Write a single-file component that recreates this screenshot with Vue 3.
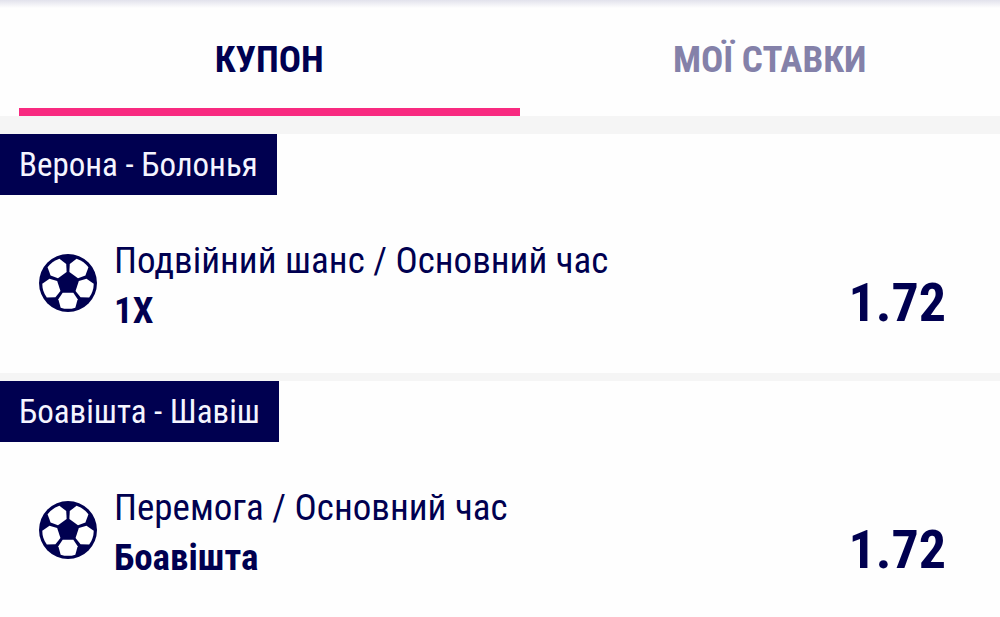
<script setup>
import { ref } from 'vue'

const tabs = [
  { id: 'coupon', label: 'КУПОН' },
  { id: 'bets', label: 'МОЇ СТАВКИ' },
]
const active = ref('coupon')

const events = [
  { id: 1, match: 'Верона - Болонья', market: 'Подвійний шанс / Основний час', pick: '1X', odds: '1.72' },
  { id: 2, match: 'Боавішта - Шавіш', market: 'Перемога / Основний час', pick: 'Боавішта', odds: '1.72' },
]

const patches = [0, 72, 144, 216, 288]
</script>

<template>
  <main class="slip">
    <nav class="tabs">
      <button
        v-for="tab in tabs"
        :key="tab.id"
        type="button"
        class="tab"
        :class="{ active: active === tab.id }"
        @click="active = tab.id"
      >
        {{ tab.label }}
      </button>
    </nav>

    <section class="events">
      <article v-for="event in events" :key="event.id" class="event">
        <h2 class="match">{{ event.match }}</h2>
        <div class="body">
          <svg class="ball" viewBox="-87 -87 174 174" aria-hidden="true">
            <circle r="87" fill="#000050" />
            <path
              v-for="angle in patches"
              :key="angle"
              d="M-16 29H16L29 49L22 74Q0 81 -22 74L-29 49Z"
              fill="#fff"
              :transform="`rotate(${angle})`"
            />
          </svg>
          <div class="details">
            <p class="market">{{ event.market }}</p>
            <p class="pick">{{ event.pick }}</p>
          </div>
          <span class="odds">{{ event.odds }}</span>
        </div>
      </article>
    </section>
  </main>
</template>

<style>
body {
  margin: 0;
  background: #fefefe;
}
</style>

<style scoped>
.slip {
  overflow: hidden;
  font-family: "Roboto Condensed", Roboto, sans-serif;
  color: #000050;
}

.tabs {
  display: grid;
  grid-template-columns: 1fr 1fr;
  padding-left: 19px;
  margin-right: -20px;
  background: linear-gradient(#e2e2ec, #fefefe 8px);
}

.tab {
  padding: 32px 0 20px;
  border: 0;
  border-bottom: 8px solid transparent;
  background: none;
  font: inherit;
  font-size: 37px;
  font-weight: 700;
  line-height: 56px;
  color: #8481a9;
  cursor: pointer;
}

.tab.active {
  border-bottom-color: #f82a80;
  color: #000050;
}

.events {
  display: grid;
  gap: 8px;
  padding-top: 18px;
  background: #f5f5f5;
}

.event {
  background: #fefefe;
}

.match {
  width: fit-content;
  margin: 0;
  padding: 0 19px;
  background: #000050;
  font-size: 33px;
  font-weight: 400;
  line-height: 61px;
  color: #f5f5ff;
}

.body {
  display: flex;
  align-items: center;
  gap: 17px;
  padding: 35px 54px 37px 39px;
}

.ball {
  flex: none;
  width: 58px;
  height: 58px;
}

.details {
  flex: 1;
  min-width: 0;
  padding-top: 6px;
}

.market,
.pick {
  margin: 0;
  font-size: 37px;
  line-height: 50px;
}

.pick {
  font-weight: 700;
}

.odds {
  align-self: flex-end;
  font-size: 54px;
  font-weight: 700;
  line-height: 66px;
}
</style>
